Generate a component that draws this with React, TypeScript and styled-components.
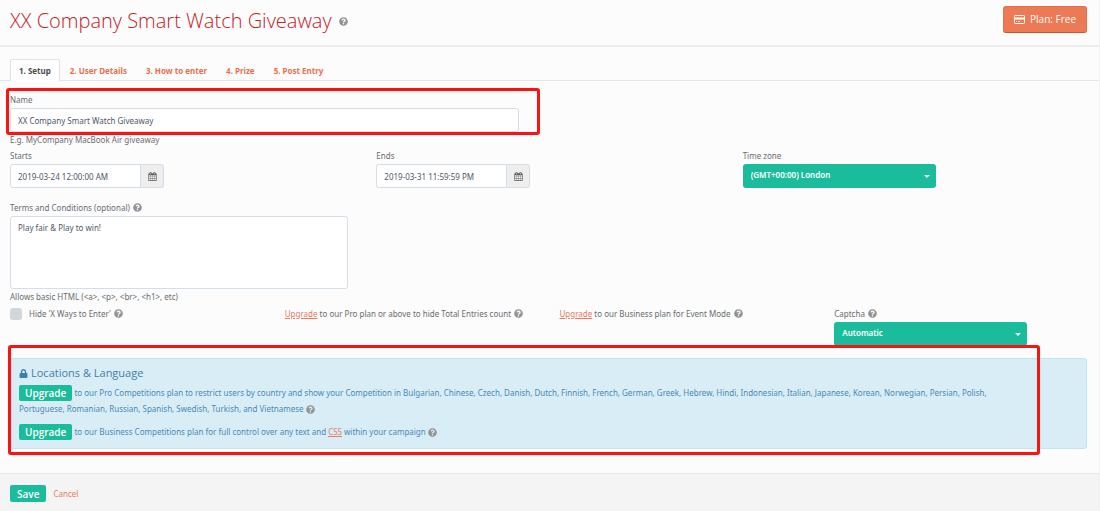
import React from 'react';
import styled, { createGlobalStyle } from 'styled-components';
import { FaLock, FaQuestionCircle } from 'react-icons/fa';

const GlobalStyle = createGlobalStyle`
  *, *::before, *::after { box-sizing: border-box; }
  body {
    margin: 0;
    background: #fcfcfc;
    color: #6a6c6f;
    font-family: 'Noto Sans', 'Open Sans', sans-serif;
    font-size: 8px;
    line-height: 13px;
  }
  input, textarea, select, button { font: inherit; margin: 0; }
`;

const displayFont = `font-family: 'Open Sans', 'Noto Sans', sans-serif;`;

const Page = styled.div`
  display: flex;
  flex-direction: column;
  min-height: 100vh;
  border-right: 1px solid #f0f0f1;
`;

const Header = styled.header`
  display: flex;
  align-items: flex-start;
  justify-content: space-between;
  height: 47px;
  padding: 6px 12px 0 10px;
  border-bottom: 2px solid #ececec;
`;

const Title = styled.h1`
  ${displayFont}
  display: flex;
  align-items: center;
  gap: 7px;
  margin: 0;
  color: #c4201e;
  font-size: 20px;
  font-weight: 300;
  line-height: 30px;
`;

const PlanButton = styled.button`
  ${displayFont}
  display: flex;
  align-items: center;
  gap: 5px;
  height: 27px;
  padding: 0 10px;
  border: 1px solid #e57049;
  border-bottom-color: #c9562f;
  border-radius: 3px;
  background: #ec7a55;
  color: #fff;
  font-size: 10px;
  font-weight: 500;
`;

const Tabs = styled.nav`
  display: flex;
  padding: 12px 10px 0;
  border-bottom: 1px solid #e6e6e6;
`;

const Tab = styled.a<{ $active?: boolean }>`
  height: 22px;
  margin: 0 1px -1px 0;
  padding: 4px 8px 0;
  border: 1px solid ${(p) => (p.$active ? '#e2e2e2' : 'transparent')};
  border-bottom: 0;
  border-radius: 3px 3px 0 0;
  background: ${(p) => (p.$active ? '#fff' : 'transparent')};
  color: ${(p) => (p.$active ? '#4a4c50' : '#ea6f4c')};
  font-weight: 700;
  text-decoration: none;
`;

const Form = styled.form`
  display: flex;
  flex: 1;
  flex-direction: column;
`;

const Main = styled.main`
  padding: 12px 12px 24px 10px;
`;

const Label = styled.label`
  display: flex;
  align-items: center;
  gap: 3px;
  margin-bottom: 2px;
`;

const Help = styled.p`
  margin: 1px 0 0;
`;

const control = `
  display: block;
  border: 1px solid #d3dee9;
  border-radius: 3px;
  background: #fff;
  color: #4f5667;
  outline: none;
`;

const TextInput = styled.input`
  ${control}
  width: 100%;
  height: 24px;
  padding: 0 7px;
`;

const TextArea = styled.textarea`
  ${control}
  width: 338px;
  max-width: 100%;
  height: 73px;
  padding: 4px 7px;
  resize: none;
`;

const NameField = styled.div`
  position: relative;
  width: calc(50% - 30px);
`;

const Highlight = styled.div<{ $top: number; $right: number; $bottom: number; $left: number }>`
  position: absolute;
  z-index: 1;
  top: ${(p) => p.$top}px;
  right: ${(p) => p.$right}px;
  bottom: ${(p) => p.$bottom}px;
  left: ${(p) => p.$left}px;
  border: 3px solid #fb1212;
  border-radius: 3px;
  pointer-events: none;
`;

const Row = styled.div<{ $columns: number; $gap: number }>`
  display: grid;
  grid-template-columns: repeat(${(p) => p.$columns}, minmax(0, 1fr));
  margin: ${(p) => p.$gap}px -12px 0 -10px;
`;

const Field = styled.div`
  padding-left: 10px;
`;

const TermsField = styled.div`
  margin-top: 13px;
`;

const DateGroup = styled.div`
  display: flex;
  width: 154px;
`;

const DateInput = styled(TextInput)`
  flex: 1;
  min-width: 0;
  border-radius: 3px 0 0 3px;
`;

const CalendarButton = styled.button`
  display: flex;
  align-items: center;
  justify-content: center;
  width: 23px;
  height: 24px;
  padding: 0;
  border: 1px solid #d3dee9;
  border-left: 0;
  border-radius: 0 3px 3px 0;
  background: #eee;
  color: #5c5c5c;
`;

const SelectBox = styled.div`
  position: relative;
  width: 193px;

  &::after {
    content: '';
    position: absolute;
    top: 11px;
    right: 6px;
    border: 3px solid transparent;
    border-top-color: #fff;
    border-bottom: 0;
    pointer-events: none;
  }
`;

const Select = styled.select`
  display: block;
  width: 100%;
  height: 24px;
  padding: 0 8px 3px;
  border: 0;
  border-radius: 3px;
  appearance: none;
  background: #1bbc9b;
  color: #fff;
  font-weight: 600;
`;

const CheckLabel = styled.label`
  display: flex;
  align-items: center;
  gap: 3px;
`;

const Checkbox = styled.input`
  width: 12px;
  height: 12px;
  margin-right: 4px;
  border-radius: 3px;
  appearance: none;
  background: #d2d7db;
`;

const Note = styled.div`
  display: flex;
  align-items: center;
  gap: 3px;
  height: 12px;
  padding-left: 10px;
  white-space: nowrap;
`;

const Link = styled.a`
  color: #ea7a60;
`;

const CancelLink = styled(Link)`
  text-decoration: none;
`;

const Panel = styled.section`
  position: relative;
  margin-top: 12px;
  padding: 6px 60px 8px 8px;
  border: 1px solid #bfe6ef;
  border-radius: 3px;
  background: #d9edf6;
  color: #4a8ab5;
`;

const PanelTitle = styled.h2`
  ${displayFont}
  display: flex;
  align-items: center;
  gap: 3px;
  margin: 0 0 4px;
  font-size: 11px;
  font-weight: 400;
  line-height: 16px;
  color: #3f80ab;
`;

const PanelText = styled.p`
  margin: 0 0 7px;
  line-height: 16px;

  &:last-of-type { margin-bottom: 0; }
  svg { vertical-align: -2px; }
`;

const Button = styled.button`
  ${displayFont}
  height: 16px;
  padding: 0 6px;
  border: 0;
  border-radius: 2px;
  background: #1bbc9b;
  color: #fff;
  font-size: 10px;
  font-weight: 600;
  line-height: 16px;
  vertical-align: top;
`;

const Footer = styled.footer`
  display: flex;
  flex: 1;
  align-items: flex-start;
  gap: 7px;
  padding: 11px 10px 8px;
  border-top: 1px solid #e6e6e6;
  background: #f4f4f4;
  line-height: 17px;
`;

const SaveButton = styled(Button)`
  height: 17px;
  padding: 0 7px;
`;

const HelpIcon = () => <FaQuestionCircle size={9} color="#939393" aria-label="Help" />;

const CardIcon = () => (
  <svg width="11" height="9" viewBox="0 0 11 9" fill="none" stroke="currentColor" aria-hidden="true">
    <rect x="0.5" y="0.5" width="10" height="8" rx="0.8" />
    <path d="M1 3.5h9" strokeWidth="2" />
    <path d="M2 6.5h1M4 6.5h2" strokeWidth="0.8" />
  </svg>
);

const CalendarIcon = () => (
  <svg width="9" height="9" viewBox="0 0 1792 1792" fill="currentColor" aria-hidden="true">
    <path d="M192 1664h288v-288h-288v288zm352 0h320v-288h-320v288zm-352-352h288v-320h-288v320zm352 0h320v-320h-320v320zm-352-384h288v-288h-288v288zm736 736h320v-288h-320v288zm-384-736h320v-288h-320v288zm768 736h288v-288h-288v288zm-384-352h320v-320h-320v320zm-352-864v-288q0-13-9.5-22.5t-22.5-9.5h-64q-13 0-22.5 9.5t-9.5 22.5v288q0 13 9.5 22.5t22.5 9.5h64q13 0 22.5-9.5t9.5-22.5zm736 864h288v-320h-288v320zm-384-384h320v-288h-320v288zm384 0h288v-288h-288v288zm32-480v-288q0-13-9.5-22.5t-22.5-9.5h-64q-13 0-22.5 9.5t-9.5 22.5v288q0 13 9.5 22.5t22.5 9.5h64q13 0 22.5-9.5t9.5-22.5zm384-64v1280q0 52-38 90t-90 38h-1408q-52 0-90-38t-38-90v-1280q0-52 38-90t90-38h128v-96q0-66 47-113t113-47h64q66 0 113 47t47 113v96h384v-96q0-66 47-113t113-47h64q66 0 113 47t47 113v96h128q52 0 90 38t38 90z" />
  </svg>
);

const tabs = ['1. Setup', '2. User Details', '3. How to enter', '4. Prize', '5. Post Entry'];

const DateField = ({ id, label, value }: { id: string; label: string; value: string }) => (
  <Field>
    <Label htmlFor={id}>{label}</Label>
    <DateGroup>
      <DateInput id={id} type="text" defaultValue={value} />
      <CalendarButton type="button" aria-label={`Choose date: ${label}`}>
        <CalendarIcon />
      </CalendarButton>
    </DateGroup>
  </Field>
);

export default function App() {
  return (
    <Page>
      <GlobalStyle />
      <Header>
        <Title>
          XX Company Smart Watch Giveaway <HelpIcon />
        </Title>
        <PlanButton type="button">
          <CardIcon />
          Plan: Free
        </PlanButton>
      </Header>
      <Tabs>
        {tabs.map((tab, i) => (
          <Tab key={tab} href="#" $active={i === 0}>
            {tab}
          </Tab>
        ))}
      </Tabs>
      <Form onSubmit={(e) => e.preventDefault()}>
        <Main>
          <NameField>
            <Label htmlFor="name">Name</Label>
            <TextInput id="name" type="text" defaultValue="XX Company Smart Watch Giveaway" />
            <Highlight $top={-5} $right={-21} $bottom={-3} $left={-4} />
          </NameField>
          <Help>E.g. MyCompany MacBook Air giveaway</Help>

          <Row $columns={3} $gap={3}>
            <DateField id="starts" label="Starts" value="2019-03-24 12:00:00 AM" />
            <DateField id="ends" label="Ends" value="2019-03-31 11:59:59 PM" />
            <Field>
              <Label htmlFor="timezone">Time zone</Label>
              <SelectBox>
                <Select id="timezone">
                  <option>(GMT+00:00) London</option>
                </Select>
              </SelectBox>
            </Field>
          </Row>

          <TermsField>
            <Label htmlFor="terms">
              Terms and Conditions (optional) <HelpIcon />
            </Label>
            <TextArea id="terms" defaultValue="Play fair &amp; Play to win!" />
            <Help>Allows basic HTML (&lt;a&gt;, &lt;p&gt;, &lt;br&gt;, &lt;h1&gt;, etc)</Help>
          </TermsField>

          <Row $columns={4} $gap={4}>
            <Field>
              <CheckLabel>
                <Checkbox type="checkbox" />
                Hide 'X Ways to Enter' <HelpIcon />
              </CheckLabel>
            </Field>
            <Note>
              <span>
                <Link href="#">Upgrade</Link> to our Pro plan or above to hide Total Entries count
              </span>
              <HelpIcon />
            </Note>
            <Note>
              <span>
                <Link href="#">Upgrade</Link> to our Business plan for Event Mode
              </span>
              <HelpIcon />
            </Note>
            <Field>
              <Label htmlFor="captcha">
                Captcha <HelpIcon />
              </Label>
              <SelectBox>
                <Select id="captcha">
                  <option>Automatic</option>
                </Select>
              </SelectBox>
            </Field>
          </Row>

          <Panel>
            <PanelTitle>
              <FaLock size={9} /> Locations &amp; Language
            </PanelTitle>
            <PanelText>
              <Button type="button">Upgrade</Button> to our Pro Competitions plan to restrict users by
              country and show your Competition in Bulgarian, Chinese, Czech, Danish, Dutch, Finnish,
              French, German, Greek, Hebrew, Hindi, Indonesian, Italian, Japanese, Korean, Norwegian,
              Persian, Polish, Portuguese, Romanian, Russian, Spanish, Swedish, Turkish, and Vietnamese{' '}
              <HelpIcon />
            </PanelText>
            <PanelText>
              <Button type="button">Upgrade</Button> to our Business Competitions plan for full control
              over any text and <Link href="#">CSS</Link> within your campaign <HelpIcon />
            </PanelText>
            <Highlight $top={-14} $right={46} $bottom={-7} $left={-3} />
          </Panel>
        </Main>
        <Footer>
          <SaveButton type="submit">Save</SaveButton>
          <CancelLink href="#">Cancel</CancelLink>
        </Footer>
      </Form>
    </Page>
  );
}
